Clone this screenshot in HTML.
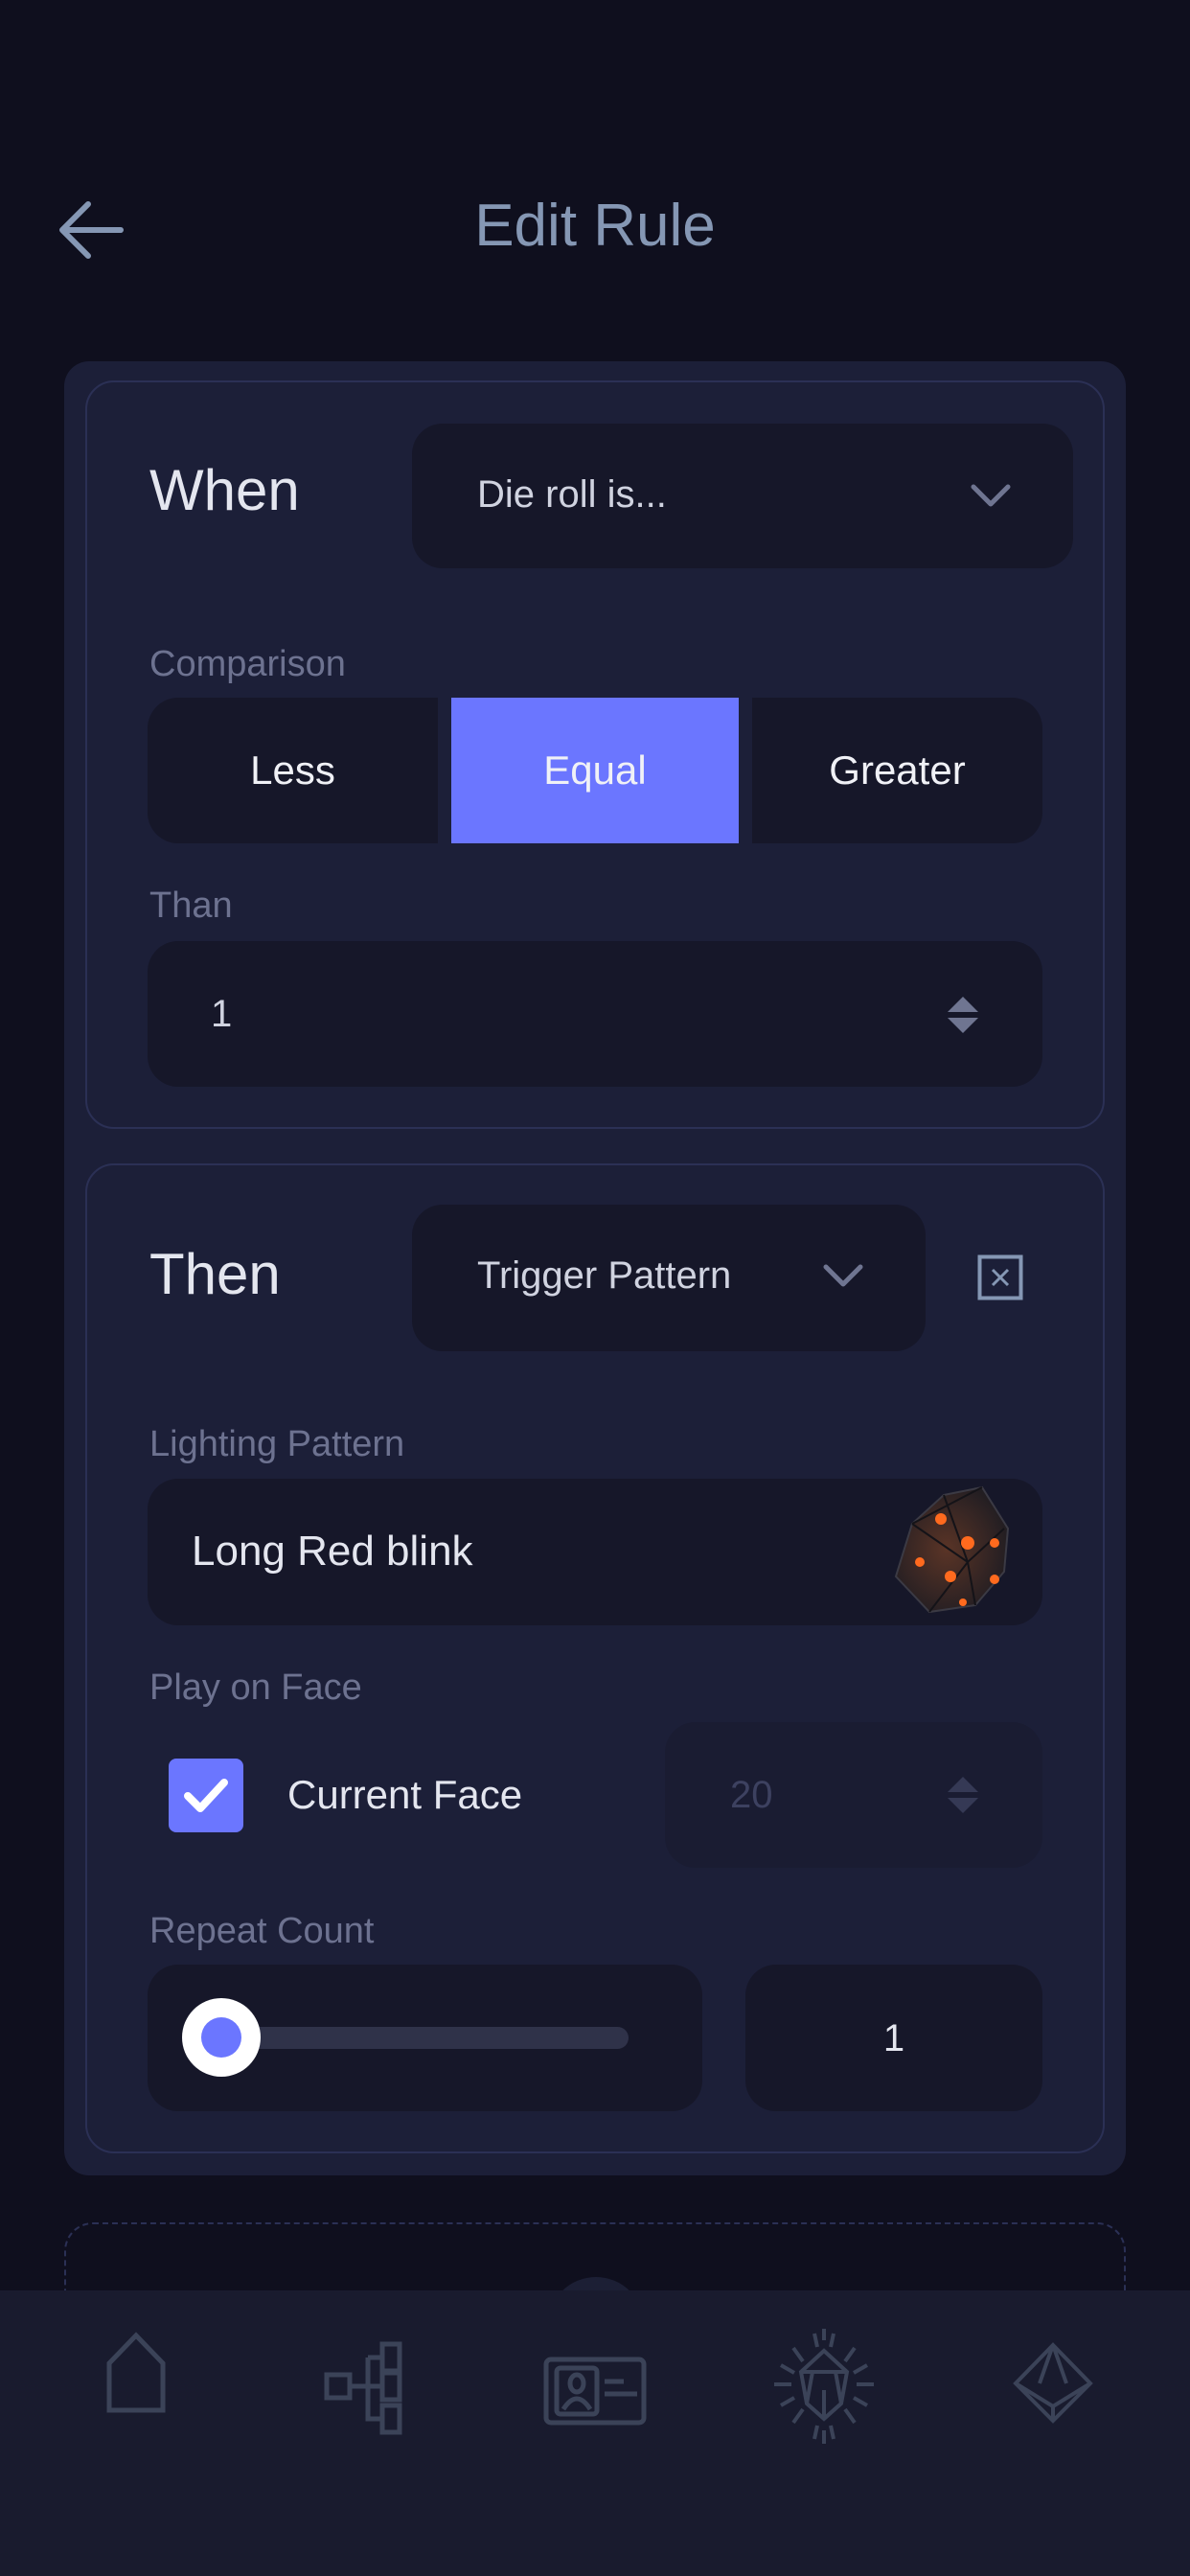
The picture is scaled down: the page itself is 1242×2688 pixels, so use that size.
<!DOCTYPE html>
<html><head><meta charset="utf-8"><style>
*{margin:0;padding:0;box-sizing:border-box}
body{width:1242px;height:2688px;background:#0f0f1e;position:relative;overflow:hidden;font-family:"Liberation Sans",sans-serif}
.a{position:absolute}
.t{position:absolute;white-space:nowrap;line-height:1}
.box{position:absolute;background:#161729;border-radius:32px}
.lbl{color:#6d7290;font-size:38px}
</style></head><body>
<svg class="a" style="left:60px;top:208px" width="70" height="64" viewBox="0 0 70 64"><path d="M66 32H6M32 5L5 32l27 27" fill="none" stroke="#8597b4" stroke-width="6" stroke-linecap="round" stroke-linejoin="round"/></svg>
<div class="t" style="left:0;width:1242px;text-align:center;top:205px;font-size:62px;color:#8597b4">Edit Rule</div>

<div class="a" style="left:67px;top:377px;width:1108px;height:1893px;background:#1c1f38;border-radius:26px"></div>
<div class="a" style="left:89px;top:397px;width:1064px;height:781px;border:2px solid #2b3055;border-radius:30px"></div>
<div class="a" style="left:89px;top:1214px;width:1064px;height:1033px;border:2px solid #2b3055;border-radius:30px"></div>

<div class="t" style="left:156px;top:482px;font-size:60px;color:#e4e6ef">When</div>
<div class="box" style="left:430px;top:442px;width:690px;height:151px"></div>
<div class="t" style="left:498px;top:496px;font-size:40px;color:#d0d3e0">Die roll is...</div>
<svg class="a" style="left:1012px;top:504px" width="44" height="26"><path d="M4 4l18 18L40 4" fill="none" stroke="#6f7591" stroke-width="5" stroke-linecap="round" stroke-linejoin="round"/></svg>

<div class="t lbl" style="left:156px;top:674px">Comparison</div>
<div class="a" style="left:154px;top:728px;width:303px;height:152px;background:#161729;border-radius:32px 0 0 32px"></div>
<div class="a" style="left:471px;top:728px;width:300px;height:152px;background:#6b76ff"></div>
<div class="a" style="left:785px;top:728px;width:303px;height:152px;background:#161729;border-radius:0 32px 32px 0"></div>
<div class="t" style="left:154px;width:303px;text-align:center;top:783px;font-size:42px;color:#f0f1f6">Less</div>
<div class="t" style="left:471px;width:300px;text-align:center;top:783px;font-size:42px;color:#f0f1f6">Equal</div>
<div class="t" style="left:785px;width:303px;text-align:center;top:783px;font-size:42px;color:#f0f1f6">Greater</div>

<div class="t lbl" style="left:156px;top:926px">Than</div>
<div class="box" style="left:154px;top:982px;width:934px;height:152px"></div>
<div class="t" style="left:220px;top:1038px;font-size:40px;color:#d0d3e0">1</div>
<svg class="a" style="left:987px;top:1036px" width="36" height="46"><path d="M2 20L18 4l16 16zM2 26l16 16 16-16z" fill="#6f7591"/></svg>

<div class="t" style="left:156px;top:1300px;font-size:60px;color:#e4e6ef">Then</div>
<div class="box" style="left:430px;top:1257px;width:536px;height:153px"></div>
<div class="t" style="left:498px;top:1311px;font-size:40px;color:#d0d3e0">Trigger Pattern</div>
<svg class="a" style="left:858px;top:1318px" width="44" height="26"><path d="M4 4l18 18L40 4" fill="none" stroke="#6f7591" stroke-width="5" stroke-linecap="round" stroke-linejoin="round"/></svg>
<svg class="a" style="left:1020px;top:1309px" width="48" height="48"><rect x="2.5" y="2.5" width="43" height="43" fill="none" stroke="#8597b4" stroke-width="4"/><path d="M16 16l16 16M32 16L16 32" stroke="#8597b4" stroke-width="3"/></svg>

<div class="t lbl" style="left:156px;top:1488px">Lighting Pattern</div>
<div class="box" style="left:154px;top:1543px;width:934px;height:153px"></div>
<div class="t" style="left:200px;top:1597px;font-size:44px;color:#e4e6ef">Long Red blink</div>
<svg class="a" style="left:930px;top:1550px" width="140" height="138" viewBox="0 0 140 138"><defs><radialGradient id="g" cx="45%" cy="50%" r="60%"><stop offset="0" stop-color="#5a3426"/><stop offset="1" stop-color="#1e1c22"/></radialGradient></defs><polygon points="55,10 95,2 122,45 118,90 88,125 40,132 5,95 22,40" fill="url(#g)" stroke="#3b3a44" stroke-width="2"/><path d="M22 40L95 2M55 10l25 70M22 40l58 40 38-35M80 80l8 45M80 80L40 132" stroke="#141318" stroke-width="2" fill="none"/><g fill="#ff6a1e"><circle cx="52" cy="35" r="6"/><circle cx="80" cy="60" r="7"/><circle cx="108" cy="60" r="5"/><circle cx="30" cy="80" r="5"/><circle cx="62" cy="95" r="6"/><circle cx="108" cy="98" r="5"/><circle cx="75" cy="122" r="4"/></g></svg>

<div class="t lbl" style="left:156px;top:1742px">Play on Face</div>
<div class="a" style="left:176px;top:1835px;width:78px;height:77px;background:#6b76ff;border-radius:8px"></div>
<svg class="a" style="left:188px;top:1850px" width="54" height="46"><path d="M8 24l13 13L46 10" fill="none" stroke="#fff" stroke-width="8" stroke-linecap="round" stroke-linejoin="round"/></svg>
<div class="t" style="left:300px;top:1852px;font-size:42px;color:#e4e6ef">Current Face</div>
<div class="a" style="left:694px;top:1797px;width:394px;height:152px;background:#1a1c32;border-radius:32px"></div>
<div class="t" style="left:762px;top:1853px;font-size:40px;color:#3d4160">20</div>
<svg class="a" style="left:987px;top:1850px" width="36" height="46"><path d="M2 20L18 4l16 16zM2 26l16 16 16-16z" fill="#353955"/></svg>

<div class="t lbl" style="left:156px;top:1996px">Repeat Count</div>
<div class="box" style="left:154px;top:2050px;width:579px;height:153px"></div>
<div class="a" style="left:231px;top:2115px;width:425px;height:23px;background:#2f3249;border-radius:12px"></div>
<div class="a" style="left:190px;top:2085px;width:82px;height:82px;background:#fff;border-radius:50%"></div>
<div class="a" style="left:210px;top:2105px;width:42px;height:42px;background:#6b76ff;border-radius:50%"></div>
<div class="box" style="left:778px;top:2050px;width:310px;height:153px"></div>
<div class="t" style="left:778px;width:310px;text-align:center;top:2107px;font-size:40px;color:#e4e6ef">1</div>

<div class="a" style="left:67px;top:2319px;width:1108px;height:200px;border:2px dashed #2b3055;border-radius:30px"></div>
<div class="a" style="left:572px;top:2376px;width:100px;height:100px;background:#1c1f35;border-radius:50%"></div>

<div class="a" style="left:0;top:2390px;width:1242px;height:298px;background:#191b2e"></div>
<svg class="a" style="left:0;top:2430px" width="1242" height="120" fill="none" stroke="#3b4358" stroke-width="5">
<path d="M114 85V36l28-29 28 29v49z"/>
<g><rect x="341" y="48" width="24" height="24"/><rect x="399" y="16" width="18" height="28"/><rect x="399" y="46" width="18" height="28"/><rect x="399" y="80" width="18" height="28"/><path d="M365 60h34M384 30h15M384 30v64h15"/></g>
<g><rect x="570" y="32" width="102" height="66" rx="5"/><rect x="581" y="41" width="42" height="48" rx="4"/><ellipse cx="602" cy="57" rx="7" ry="9"/><path d="M588 84q14-22 28 0M631 55h20M631 68h34"/></g>
<g stroke-width="4"><polygon points="860,23 884,45 878,78 860,94 842,78 836,45"/><path d="M836 45h48M848 45l-6 33M872 45l6 33M842 78l18 16 18-16M860 94V64M860 0v12M860 106v14M808 58h18M894 58h18M828 20l10 14M892 20l-10 14M828 98l10-14M892 98l-10-14M815 38l14 8M905 38l-14 8M815 80l14-8M905 80l-14-8M850 5l3 14M870 5l-3 14M850 115l3-14M870 115l-3-14"/></g>
<g stroke-width="4"><polygon points="1099,17 1138,57 1099,96 1060,57"/><path d="M1060 57l39 24 39-24M1099 81v15M1099 17l-14 40M1099 17l14 40"/></g>
</svg>
</body></html>
